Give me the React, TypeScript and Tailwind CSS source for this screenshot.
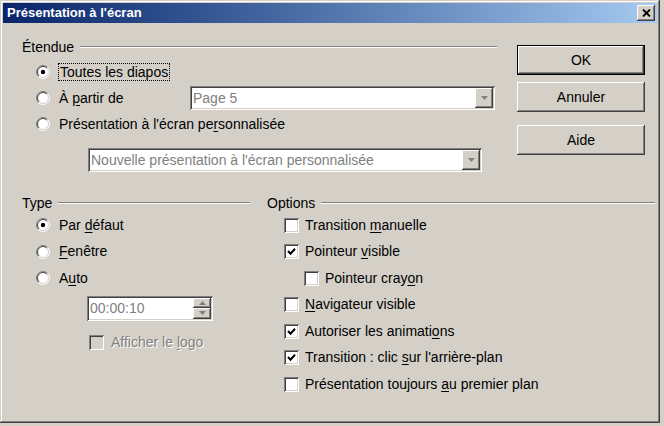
import React from "react";

const FONT = "font-['Liberation_Sans',Arial,sans-serif]";
const RAISED =
  "shadow-[inset_-1px_-1px_0_#404040,inset_1px_1px_0_#ffffff,inset_-2px_-2px_0_#808080,inset_2px_2px_0_#d4d0c8]";
const SUNKEN =
  "shadow-[inset_1px_1px_0_#808080,inset_-1px_-1px_0_#ffffff,inset_2px_2px_0_#404040,inset_-2px_-2px_0_#d4d0c8]";

function Radio({ checked = false }: { checked?: boolean }) {
  return (
    <svg width="14" height="14" viewBox="0 0 14 14" className="shrink-0">
      <circle cx="7" cy="7" r="6" fill="#ffffff" />
      <path d="M2.4 11.6 A6.5 6.5 0 0 1 11.6 2.4" fill="none" stroke="#808080" strokeWidth="1" />
      <path d="M11.6 2.4 A6.5 6.5 0 0 1 2.4 11.6" fill="none" stroke="#ffffff" strokeWidth="1" />
      <path d="M3.1 10.9 A5.5 5.5 0 0 1 10.9 3.1" fill="none" stroke="#404040" strokeWidth="1" />
      <path d="M10.9 3.1 A5.5 5.5 0 0 1 3.1 10.9" fill="none" stroke="#d4d0c8" strokeWidth="1" />
      {checked && <circle cx="7" cy="7" r="2.2" fill="#000000" />}
    </svg>
  );
}

function Checkbox({ checked = false, disabled = false }: { checked?: boolean; disabled?: boolean }) {
  return (
    <div
      className={`w-[15px] h-[15px] shrink-0 flex items-center justify-center ${SUNKEN} ${
        disabled ? "bg-[#d4d0c8]" : "bg-white"
      }`}
    >
      {checked && (
        <svg width="15" height="15" viewBox="0 0 15 15">
          <polyline points="4,7 6.5,9.7 11,4.8" fill="none" stroke="#000" strokeWidth="2" />
        </svg>
      )}
    </div>
  );
}

// underline the access key letter
function Label({ text, k, className = "" }: { text: string; k?: number; className?: string }) {
  if (k === undefined) return <span className={className}>{text}</span>;
  return (
    <span className={`whitespace-nowrap ${className}`}>
      {text.slice(0, k)}
      <span className="underline underline-offset-2">{text[k]}</span>
      {text.slice(k + 1)}
    </span>
  );
}

function GroupHeader({ title }: { title: string }) {
  return (
    <div className="h-[18px] flex items-center">
      <span>{title}</span>
      <div className="flex-1 ml-[6px] border-t border-b border-t-[#808080] border-b-white" />
    </div>
  );
}

function DownArrow() {
  return (
    <svg width="9" height="5" viewBox="0 0 9 5">
      <polygon points="1,0 8,0 4.5,4" fill="#808080" />
    </svg>
  );
}

function Combo({ value, className }: { value: string; className: string }) {
  return (
    <div className={`h-[24px] bg-white flex items-stretch p-[2px] ${SUNKEN} ${className}`}>
      <span className="flex-1 pl-[1px] leading-[20px] text-[#808080] truncate">{value}</span>
      <div className={`w-[18px] bg-[#d4d0c8] flex items-center justify-center ${RAISED}`}>
        <DownArrow />
      </div>
    </div>
  );
}

function Button({ label, main = false, className = "" }: { label: string; main?: boolean; className?: string }) {
  return (
    <div className={`h-[30px] ${main ? "border border-black" : ""} ${className}`}>
      <div className={`h-full flex items-center justify-center bg-[#d4d0c8] ${RAISED}`}>{label}</div>
    </div>
  );
}

const options = [
  { text: "Transition manuelle", k: 11, checked: false, indent: false },
  { text: "Pointeur visible", k: 9, checked: true, indent: false },
  { text: "Pointeur crayon", k: 13, checked: false, indent: true },
  { text: "Navigateur visible", k: 0, checked: false, indent: false },
  { text: "Autoriser les animations", k: 21, checked: true, indent: false },
  { text: "Transition : clic sur l'arrière-plan", k: 18, checked: true, indent: false },
  { text: "Présentation toujours au premier plan", k: 22, checked: false, indent: false },
];

export default function App() {
  return (
    <div className={`w-[664px] h-[426px] bg-[#d4d0c8] text-[14px] text-black ${FONT}`}>
      <div
        className={`w-[660px] h-[423px] p-[3px] flex flex-col bg-[#d4d0c8] shadow-[inset_-1px_-1px_0_#404040,inset_1px_1px_0_#d4d0c8,inset_-2px_-2px_0_#808080,inset_2px_2px_0_#ffffff]`}
      >
        {/* title bar */}
        <div className="h-[20px] flex items-center bg-linear-to-r from-[#0a246a] to-[#a6caf0]">
          <span className="pl-[4px] flex-1 text-white font-bold text-[13px]">Présentation à l'écran</span>
          <div className={`w-[18px] h-[16px] mr-[2px] bg-[#d4d0c8] flex items-center justify-center ${RAISED}`}>
            <svg width="9" height="8" viewBox="0 0 9 8">
              <path d="M1 0.5 L8 7.5 M8 0.5 L1 7.5" stroke="#000" strokeWidth="1.8" />
            </svg>
          </div>
        </div>

        <div className="flex-1 flex flex-col pl-[19px] pr-[2px] pt-[15px]">
          {/* top row */}
          <div className="flex">
            <div className="w-[475px] flex flex-col">
              <GroupHeader title="Étendue" />
              <div className="mt-[3px] h-[26px] flex items-center pl-[14px]">
                <Radio checked />
                <span className="ml-[8px] border border-dotted border-black px-[1px] leading-[16px]">
                  Toutes les diapos
                </span>
              </div>
              <div className="h-[26px] flex items-center pl-[14px]">
                <Radio />
                <Label text="À partir de" k={2} className="ml-[9px] w-[131px]" />
                <Combo value="Page 5" className="w-[305px]" />
              </div>
              <div className="h-[26px] flex items-center pl-[14px]">
                <Radio />
                <Label text="Présentation à l'écran personnalisée" k={25} className="ml-[9px]" />
              </div>
              <Combo value="Nouvelle présentation à l'écran personnalisée" className="mt-[11px] ml-[66px] w-[394px]" />
            </div>
            <div className="ml-[20px] mt-[7px] w-[128px] flex flex-col">
              <Button label="OK" main />
              <Button label="Annuler" className="mt-[7px]" />
              <Button label="Aide" className="mt-[13px]" />
            </div>
          </div>

          {/* bottom row */}
          <div className="flex mt-[22px]">
            <div className="w-[245px] pr-[17px] flex flex-col">
              <GroupHeader title="Type" />
              <div className="h-[26.5px] flex items-center pl-[14px]">
                <Radio checked />
                <Label text="Par défaut" k={4} className="ml-[9px]" />
              </div>
              <div className="h-[26.5px] flex items-center pl-[14px]">
                <Radio />
                <Label text="Fenêtre" k={0} className="ml-[9px]" />
              </div>
              <div className="h-[26.5px] flex items-center pl-[14px]">
                <Radio />
                <Label text="Auto" k={1} className="ml-[9px]" />
              </div>
              <div className={`mt-[4px] ml-[65px] w-[126px] h-[25px] bg-white flex p-[2px] ${SUNKEN}`}>
                <span className="flex-1 pl-[1px] leading-[21px] text-[#808080]">00:00:10</span>
                <div className="w-[18px] flex flex-col">
                  <div className={`flex-1 bg-[#d4d0c8] flex items-center justify-center ${RAISED}`}>
                    <svg width="7" height="4" viewBox="0 0 7 4">
                      <polygon points="3.5,0 7,4 0,4" fill="#808080" />
                    </svg>
                  </div>
                  <div className={`flex-1 bg-[#d4d0c8] flex items-center justify-center ${RAISED}`}>
                    <svg width="7" height="4" viewBox="0 0 7 4">
                      <polygon points="0,0 7,0 3.5,4" fill="#808080" />
                    </svg>
                  </div>
                </div>
              </div>
              <div className="mt-[9px] h-[26.5px] flex items-center pl-[67px]">
                <Checkbox disabled />
                <Label
                  text="Afficher le logo"
                  k={12}
                  className="ml-[7px] text-[#808080] [text-shadow:1px_1px_0_#ffffff]"
                />
              </div>
            </div>

            <div className="flex-1 flex flex-col">
              <GroupHeader title="Options" />
              {options.map((o) => (
                <div
                  key={o.text}
                  className={`h-[26.5px] flex items-center ${o.indent ? "pl-[37px]" : "pl-[17px]"}`}
                >
                  <Checkbox checked={o.checked} />
                  <Label text={o.text} k={o.k} className="ml-[6px]" />
                </div>
              ))}
            </div>
          </div>
        </div>
      </div>
    </div>
  );
}
